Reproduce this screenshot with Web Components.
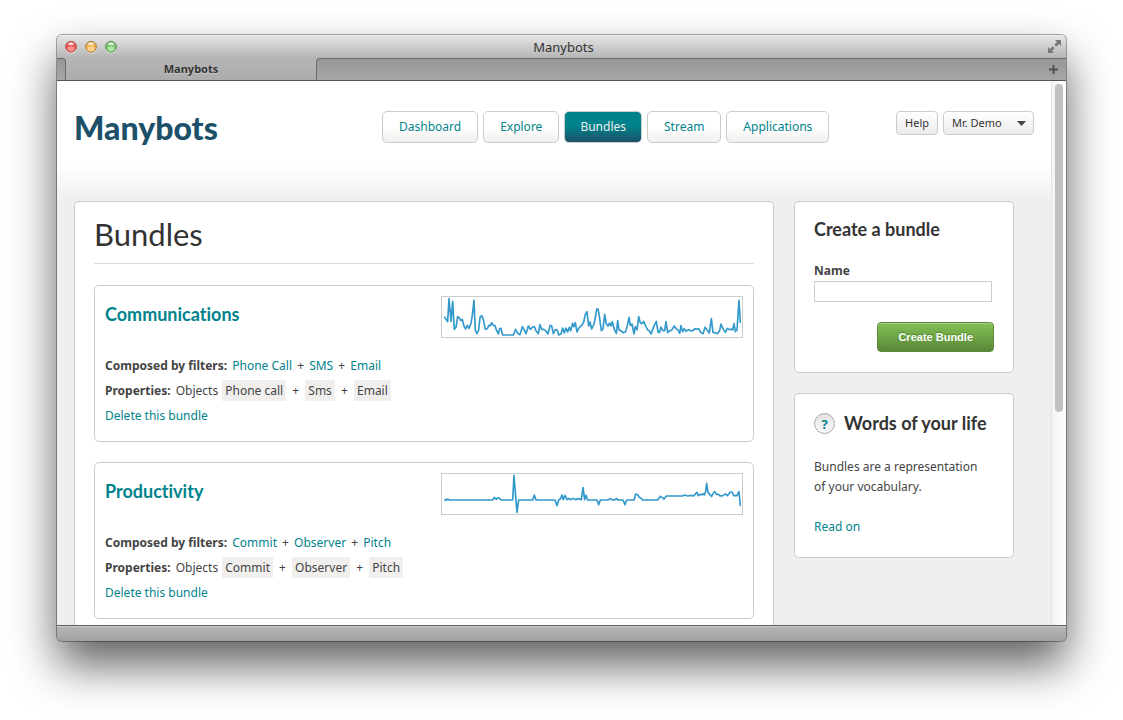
<!DOCTYPE html>
<html lang="en">
<head>
<meta charset="utf-8">
<meta name="viewport" content="width=device-width, initial-scale=1">
<title>Manybots</title>
<style>
  html, body { margin: 0; height: 100%; background: #fff; }
  body {
    box-sizing: border-box; padding: 35px 57px 79px; overflow: hidden;
    font: 12px/20px "Noto Sans", "Open Sans", sans-serif; color: #444;
    --teal: #00838c; --navy: #1d5169; --line: #ccc; --paper: #f0efed;
    --display: Lato, "Noto Sans", sans-serif;
  }
</style>
</head>
<body>
<browser-window heading="Manybots">
  <site-header></site-header>
  <page-layout>
    <panel-card slot="main">
      <page-title>Bundles</page-title>
      <bundle-card name="Communications" filters="Phone Call,SMS,Email" objects="Phone call,Sms,Email"
        points="28,80 33,88 38,95 42,26 48,94 53,34 58,118 63,112 68,80 73,84 77,92 82,88 87,108 92,117 97,106 102,115 108,100 112,76 117,31 121,121 126,131 131,120 135,82 140,77 145,88 151,118 157,116 162,106 166,107 170,98 175,106 180,107 185,122 190,132 194,116 198,115 203,135 235,135 242,118 248,130 255,134 262,110 267,118 273,131 280,108 286,118 293,111 298,110 303,122 310,131 315,104 320,118 326,118 332,122 339,132 345,106 350,108 355,131 361,119 367,120 371,135 378,132 383,114 388,129 393,114 398,126 403,112 407,122 413,100 417,110 421,98 426,126 433,112 440,106 446,96 451,74 456,65 461,108 465,96 470,117 477,102 482,78 485,57 489,57 493,78 499,122 504,116 509,73 514,102 519,108 524,99 528,108 532,95 538,118 544,130 548,92 552,120 558,122 564,128 571,126 576,112 582,82 586,106 591,102 597,132 601,110 606,120 611,80 616,98 621,101 626,94 632,108 638,120 643,122 648,132 654,116 659,104 664,94 669,126 673,128 678,111 683,122 689,122 693,95 698,128 703,122 708,122 713,116 718,108 723,116 729,120 734,130 738,107 743,125 748,116 753,124 760,119 766,122 774,122 780,116 785,118 791,116 797,127 804,131 810,112 815,118 823,129 829,86 834,127 840,128 847,131 854,122 858,102 864,116 871,127 877,115 882,119 888,117 893,120 897,101 901,125 906,120 912,31 916,99"></bundle-card>
      <bundle-card name="Productivity" filters="Commit,Observer,Pitch" objects="Commit,Observer,Pitch"
        points="28,109 33,112 38,108 43,111 173,111 178,103 184,109 189,104 194,106 198,111 233,111 237,37 242,100 246,148 251,111 293,111 298,96 303,111 360,111 366,128 371,111 376,108 381,96 385,110 390,97 396,110 401,106 406,110 415,106 421,110 432,107 439,110 444,74 449,110 453,97 458,111 486,111 491,125 496,111 518,111 526,107 532,111 540,110 545,107 549,111 564,111 570,125 575,111 597,111 602,93 608,95 614,104 618,105 623,111 668,111 676,100 682,104 687,108 694,99 743,99 749,96 758,99 768,97 776,99 782,92 786,88 790,98 795,94 800,96 804,92 808,96 812,85 815,61 819,88 825,95 830,100 835,90 839,86 844,94 850,94 856,99 864,98 869,94 873,93 877,98 881,94 886,87 891,87 896,98 906,98 912,86 916,129"
        top="33"></bundle-card>
    </panel-card>
    <panel-card slot="side"><create-form></create-form></panel-card>
    <panel-card slot="side"><help-note heading="Words of your life">Bundles are a representation of your vocabulary.</help-note></panel-card>
  </page-layout>
</browser-window>

<script>
const define = (name, render) => customElements.define(name, class extends HTMLElement {
  connectedCallback() {
    if (this.shadowRoot) return;
    const template = document.createElement('template');
    template.innerHTML = render(this);
    this.attachShadow({ mode: 'open' }).append(template.content.cloneNode(true));
  }
});
const list = (el, key) => el.getAttribute(key).split(',');

define('browser-window', el => `
<style>
  :host { display: flex; flex-direction: column; height: 100%; border-radius: 5px; overflow: hidden;
    box-shadow: 0 0 0 1px #00000055, 0 24px 46px #000000a0; background: #b0b0b0; }
  .title { display: grid; grid-template-columns: 1fr auto 1fr; align-items: center; height: 23px; padding: 0 4px 0 8px;
    flex: none; background: linear-gradient(#e6e6e6, #b5b5b5); box-shadow: inset 0 1px #f0f0f0; color: #333; font-size: 13px; }
  .lights { display: flex; gap: 8px; }
  .full { justify-self: end; display: flex; }
  svg { display: block; }
  .tabs { display: flex; flex: none; height: 22px; border-bottom: 1px solid #555; background: #b3b3b3; }
  .before, .after { border: solid #6b6b6b; background: linear-gradient(#979797, #a6a6a6); }
  .before { width: 8px; border-width: 1px 1px 0 0; border-radius: 0 4px 0 0; }
  .after { flex: 1; display: flex; justify-content: flex-end; border-width: 1px 0 0 1px; border-radius: 4px 0 0 0; }
  .tab { width: 250px; background: linear-gradient(#b5b5b5, #acacac); text-align: center; font-size: 11px; line-height: 22px;
    font-weight: 700; color: #333; text-shadow: 0 1px #ccc; }
  .add { width: 26px; padding: 0; border: 0; background: none; display: grid; place-items: center; }
  .view { flex: 1; min-height: 0; display: flex; background: var(--paper); }
  .content { flex: 1; min-width: 0; overflow: hidden; }
  .track { width: 10px; padding: 3px 1px 3px 3px; border-left: 1px solid #e5e5e5; background: linear-gradient(90deg, #f3f3f3, #fff); }
  .thumb { width: 8px; height: 61%; border-radius: 4px; background: #c1c1c1; }
  .foot { flex: none; height: 15px; border-top: 1px solid #5e5e5e; background: linear-gradient(#b5b5b5, #a2a2a2); box-shadow: inset 0 1px #ccc; }
</style>
<div class="title">
  <div class="lights">${[['#ee5a58', '#a84644', '#ff9c98'], ['#f0ae52', '#a3763a', '#ffdf9c'], ['#7fc472', '#4f8a48', '#b9ecaa']].map(([c, d, l]) => `
    <svg width="12" height="14" viewBox="0 0 12 14" aria-hidden="true"><circle cx="6" cy="7.6" r="5.8" fill="#eee"/><circle cx="6" cy="6.800" r="5.4" fill="${c}" stroke="${d}" stroke-width="1"/><ellipse cx="6" cy="3.800" rx="2.800" ry="1.500" fill="#fff" opacity=".75"/><ellipse cx="6" cy="9" rx="3.600" ry="2.400" fill="${l}" opacity=".8"/></svg>`).join('')}
  </div>
  <span>${el.getAttribute('heading')}</span>
  <span class="full"><svg width="15" height="15" viewBox="0 0 15 15" fill="#777" aria-hidden="true"><path d="M8 1h6v6l-2-2-2.700 2.700-2-2L10 3zM1 8l2 2 2.700-2.700 2 2L5 12l2 2H1z"/></svg></span>
</div>
<div class="tabs">
  <div class="before"></div><div class="tab">${el.getAttribute('heading')}</div>
  <div class="after"><button class="add" aria-label="New tab"><svg width="9" height="9" viewBox="0 0 9 9"><path d="M4.500 0v9M0 4.500h9" stroke="#505050" stroke-width="2"/></svg></button></div>
</div>
<div class="view"><div class="content"><slot></slot></div><div class="track"><div class="thumb"></div></div></div>
<div class="foot"></div>`);

define('site-header', () => `
<style>
  :host { display: block; height: 120px; background: linear-gradient(#fff 70%, var(--paper)); }
  header { display: flex; align-items: flex-start; max-width: 960px; margin: 0 auto; padding: 30px 0 0; }
  .logo { flex: 0 1 308px; font: 900 32px/34px var(--display); color: var(--navy); text-decoration: none; }
  nav { display: flex; gap: 5px; }
  nav a { padding: 0 16px; border: 1px solid var(--line); border-radius: 5px; line-height: 30px; color: var(--teal);
    text-decoration: none; background: linear-gradient(#fff 50%, #f0efed); }
  nav a[aria-current] { padding: 0 15px; color: #eee; background: linear-gradient(#00838c 45%, #1d5169); }
  .account { display: flex; gap: 5px; margin-left: auto; }
  button, select { appearance: none; box-sizing: border-box; height: 24px; margin: 0; padding: 0 8px; border: 1px solid var(--line);
    border-radius: 4px; font: 11px/20px "Noto Sans", sans-serif; color: #333; background: linear-gradient(#fff, #ebebeb); }
  .menu { display: grid; width: 91px; }
  .menu > * { grid-area: 1 / 1; }
  .menu svg { place-self: center end; margin-right: 8px; pointer-events: none; }
</style>
<header>
  <a class="logo" href="#">Manybots</a>
  <nav>${['Dashboard', 'Explore', 'Bundles', 'Stream', 'Applications'].map(t => `<a href="#"${t === 'Bundles' ? ' aria-current="page"' : ''}>${t}</a>`).join('')}</nav>
  <div class="account"><button>Help</button>
    <div class="menu"><select aria-label="Account"><option>Mr. Demo</option></select>
    <svg width="9" height="5" viewBox="0 0 9 5"><path d="M0 0h9L4.500 5z" fill="#444"/></svg></div></div>
</header>`);

define('page-layout', () => `
<style>
  :host { display: grid; grid-template-columns: minmax(0, 1fr) 220px; align-items: start; gap: 20px; box-sizing: border-box;
    max-width: 960px; margin: 0 auto; padding-right: 20px; }
  aside { display: grid; grid-template-columns: minmax(0, 1fr); gap: 20px; }
</style>
<main><slot name="main"></slot></main><aside><slot name="side"></slot></aside>`);

define('panel-card', () => `
<style>:host { display: block; padding: 16px 19px 20px; background: #fff; border: 1px solid var(--line); border-radius: 5px; }</style>
<slot></slot>`);

define('page-title', () => `
<style>
  :host { display: block; border-bottom: 1px solid #ddd; padding-bottom: 13px; }
  h1 { margin: 0; font: 400 31px/32px var(--display); color: #333; }
</style>
<h1><slot></slot></h1>`);

define('bundle-card', el => `
<style>
  :host { display: block; margin-top: 20px; padding: 10px 10px 13px; border: 1px solid var(--line); border-radius: 5px; }
  :host(:first-of-type) { margin-top: 21px; }
  .top { display: flex; justify-content: space-between; align-items: flex-start; margin-bottom: 15px; }
  h2 { margin: 0; padding-top: 8px; font: 700 18px/20px var(--display); font-variant-ligatures: none; }
  a { color: var(--teal); text-decoration: none; }
  .chart { display: block; border: 1px solid var(--line); width: 300px; height: 40px; }
  p { margin: 0; line-height: 25px; }
  b { margin-right: 2px; }
  .plus { margin: 0 2px; }
  .tag { display: inline-block; padding: 0 3px; margin: 0 1px; line-height: 21px; background: var(--paper); }
</style>
<div class="top"><h2><a href="#">${el.getAttribute('name')}</a></h2>
<svg class="chart" viewBox="21 ${el.getAttribute('top') || 21} 900 120" role="img" aria-label="Activity"><polyline points="${el.getAttribute('points')}" fill="none" stroke="#3399cc" stroke-width="5" stroke-linejoin="round"/></svg></div>
<p><b>Composed by filters:</b> ${list(el, 'filters').map(t => `<a href="#">${t}</a>`).join(' <span class="plus">+</span> ')}</p>
<p><b>Properties:</b> Objects ${list(el, 'objects').map(t => `<span class="tag">${t}</span>`).join(' <span class="plus">+</span> ')}</p>
<p><a href="#">Delete this bundle</a></p>`);

define('create-form', () => `
<style>
  :host { display: block; }
  h2 { margin: 0 0 21px; font: 700 18px/22px var(--display); color: #333; }
  form { display: flex; flex-direction: column; }
  label { font-weight: 700; line-height: 20px; }
  input { box-sizing: border-box; min-width: 0; height: 21px; margin: 0 2px 20px 0; border: 1px solid var(--line); background: #fff; font: inherit; }
  button { align-self: flex-end; height: 30px; padding: 0 20px; border: 1px solid #5b8c3a; border-radius: 4px;
    font: 700 11px/20px "Liberation Sans", sans-serif; color: #fff; text-shadow: 0 -1px #4b8a2c;
    background: linear-gradient(#82c153, #5a8639); box-shadow: inset 0 1px #a5d584; }
</style>
<h2>Create a bundle</h2>
<form><label for="name">Name</label><input id="name" type="text"><button type="button">Create Bundle</button></form>`);

define('help-note', el => `
<style>
  :host { display: block; }
  .head { display: flex; align-items: center; gap: 9px; margin-bottom: 23px; padding-top: 2px; }
  .mark { display: grid; place-items: center; width: 19px; height: 19px; border: 1px solid #aaa; border-radius: 50%;
    font-weight: 700; font-size: 13px; color: var(--teal); background: linear-gradient(#e2e2e2, #fafafa); }
  h2 { margin: 0; font: 700 18px/22px var(--display); color: #333; }
  p { margin: 0 0 20px; padding-right: 10px; }
  a { color: var(--teal); text-decoration: none; }
</style>
<div class="head"><span class="mark">?</span><h2>${el.getAttribute('heading')}</h2></div>
<p><slot></slot></p><a href="#">Read on</a>`);
</script>
</body>
</html>
